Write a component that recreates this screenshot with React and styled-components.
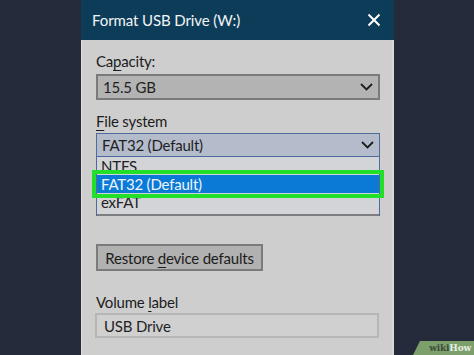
import styled, { createGlobalStyle } from 'styled-components';

const GlobalStyle = createGlobalStyle`
    html, body {
        margin: 0;
        padding: 0;
        background: #262b3b;
        overflow: hidden;
    }
`;

const Page = () => {
    return (
        <>
            <GlobalStyle />
            <Stage>
                <Dialog>
                    <TitleBar>
                        <Title>Format USB Drive (W:)</Title>
                        <CloseIcon />
                    </TitleBar>
                    <Body>
                        <Label>
                            Ca<Key>p</Key>acity:
                        </Label>
                        <Select>
                            <span>15.5 GB</span>
                            <Chevron />
                        </Select>

                        <Label $top={11}>
                            <Key>F</Key>ile system
                        </Label>
                        <Field>
                            <Select $active>
                                <span>FAT32 (Default)</span>
                                <Chevron />
                            </Select>
                            <DropList>
                                <Option>NTFS</Option>
                                <Option $selected>FAT32 (Default)</Option>
                                <Option>exFAT</Option>
                                <ListFooter />
                            </DropList>
                        </Field>

                        <RestoreButton>
                            <span>
                                Restore <Key>d</Key>evice defaults
                            </span>
                        </RestoreButton>

                        <Label $top={21}>
                            Volume <Key>l</Key>abel
                        </Label>
                        <TextInput>USB Drive</TextInput>
                    </Body>
                </Dialog>
                <Badge>
                    <BadgeWiki>wiki</BadgeWiki>
                    <BadgeHow>How</BadgeHow>
                </Badge>
            </Stage>
        </>
    );
};
export default Page;

const CloseIcon = () => (
    <svg width="14" height="14" viewBox="0 0 14 14">
        <path d="M1.5 1.5 L12.5 12.5 M12.5 1.5 L1.5 12.5" stroke="#ffffff" strokeWidth="2" fill="none" />
    </svg>
);

const Chevron = () => (
    <svg width="13" height="8" viewBox="0 0 13 8">
        <polyline points="1,1 6.5,6.5 12,1" stroke="#1d1d1d" strokeWidth="1.8" fill="none" />
    </svg>
);

const Stage = styled.div`
    position: relative;
    width: 474px;
    height: 355px;
    display: flex;
    padding-left: 81px;
    box-sizing: border-box;
    font-family: 'Lato', 'Liberation Sans', sans-serif;
`;

const Dialog = styled.div`
    width: 313px;
    display: flex;
    flex-direction: column;
`;

const TitleBar = styled.div`
    height: 40px;
    flex-shrink: 0;
    background: #0d3c59;
    display: flex;
    align-items: center;
    justify-content: space-between;
    padding: 0 13px 1px 11px;
    box-sizing: border-box;
`;

const Title = styled.div`
    color: #f2f5f7;
    font-size: 15px;
    letter-spacing: -0.1px;
`;

const Body = styled.div`
    flex: 1;
    background: #cecece;
    border-left: 1px solid #dedede;
    border-right: 2px solid #d8d8d8;
    padding: 11px 12px 0 14px;
    display: flex;
    flex-direction: column;
    align-items: flex-start;
    letter-spacing: -0.2px;
`;

const Label = styled.div`
    margin-top: ${(p) => p.$top || 0}px;
    height: 20px;
    line-height: 20px;
    font-size: 15px;
    color: #1c1c1c;
`;

const Key = styled.span`
    text-decoration: underline;
    text-underline-offset: 3px;
    text-decoration-thickness: 1px;
`;

const Field = styled.div`
    position: relative;
    align-self: stretch;
`;

const Select = styled.div`
    align-self: stretch;
    margin-top: ${(p) => (p.$active ? 2 : 3)}px;
    height: ${(p) => (p.$active ? 24 : 26)}px;
    box-sizing: border-box;
    border: ${(p) => (p.$active ? '1px solid #4f6a9c' : '2px solid #7a7a7a')};
    background: ${(p) => (p.$active ? '#b4bccb' : '#b3b3b3')};
    display: flex;
    align-items: center;
    justify-content: space-between;
    padding: 0 5px 0 5px;
    font-size: 15px;
    color: #1f1f1f;
`;

const DropList = styled.div`
    position: absolute;
    top: 26px;
    left: 0;
    right: 0;
    background: #d3d4d8;
    border-left: 1px solid #4f6a9c;
    border-right: 1px solid #4f6a9c;
    display: flex;
    flex-direction: column;
    z-index: 2;
`;

const Option = styled.div`
    height: 18px;
    line-height: 18px;
    padding-left: 4px;
    font-size: 15px;
    color: ${(p) => (p.$selected ? '#eef5ff' : '#222222')};
    background: ${(p) => (p.$selected ? '#0b7ad6' : 'transparent')};
    outline: ${(p) => (p.$selected ? '4px solid #22e02a' : 'none')};
    outline-offset: 1px;
    position: relative;
    z-index: ${(p) => (p.$selected ? 1 : 0)};
`;

const ListFooter = styled.div`
    height: 2px;
    margin-top: 1px;
    border-bottom: 2px solid #7e7e80;
`;

const RestoreButton = styled.div`
    margin-top: 87px;
    width: 167px;
    height: 27px;
    box-sizing: border-box;
    border: 2px solid #7b7b7b;
    background: #b1b1b1;
    display: flex;
    align-items: center;
    justify-content: center;
    font-size: 15px;
    color: #1c1c1c;
`;

const TextInput = styled.div`
    align-self: stretch;
    margin: 1px 1px 0 -1px;
    height: 25px;
    box-sizing: border-box;
    border: 2px solid #b6b6b6;
    background: #d0d0d0;
    display: flex;
    align-items: center;
    padding-left: 7px;
    font-size: 15px;
    color: #1f1f1f;
`;

const Badge = styled.div`
    position: absolute;
    right: 0;
    bottom: 0;
    width: 61px;
    height: 14px;
    background: #7c9f6c;
    clip-path: polygon(7px 0, 100% 0, 100% 100%, 0 100%);
    display: flex;
    align-items: center;
    justify-content: flex-end;
    padding-right: 3px;
    box-sizing: border-box;
    font-family: 'DejaVu Serif', serif;
    font-weight: 700;
    font-size: 9px;
    letter-spacing: -0.2px;
`;

const BadgeWiki = styled.span`
    color: #3e4d3b;
`;

const BadgeHow = styled.span`
    color: #e6eee2;
`;
